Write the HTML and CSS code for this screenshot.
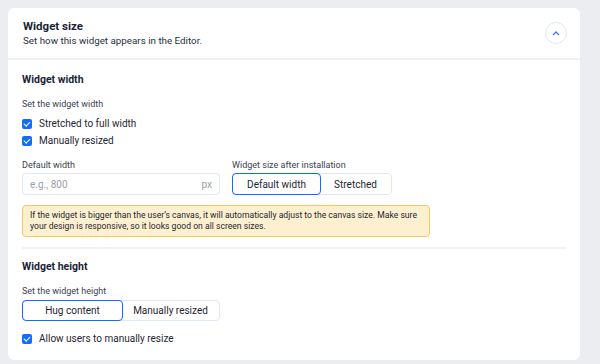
FILE: index.html
```html
<!DOCTYPE html>
<html lang="en">
<head>
  <meta charset="UTF-8">
  <title>Widget size</title>
  <link rel="stylesheet" href="styles.css">
</head>
<body>
  <div class="card">
    <div class="card-header">
      <div>
        <h1>Widget size</h1>
        <p class="subtitle">Set how this widget appears in the Editor.</p>
      </div>
      <button class="collapse" type="button" aria-label="Collapse">
        <svg width="8" height="5" viewBox="0 0 8 5"><path d="M1 4 L4 1 L7 4" fill="none" stroke="#3f7bf0" stroke-width="1.3"/></svg>
      </button>
    </div>

    <div class="card-body">
      <h2>Widget width</h2>
      <p class="hint">Set the widget width</p>
      <label class="check"><span class="box"></span>Stretched to full width</label>
      <label class="check"><span class="box"></span>Manually resized</label>

      <div class="field-row">
        <div class="field">
          <span class="field-label">Default width</span>
          <div class="input">
            <span class="placeholder">e.g., 800</span>
            <span class="unit">px</span>
          </div>
        </div>
        <div class="field">
          <span class="field-label">Widget size after installation</span>
          <div class="segmented seg-small">
            <span class="seg active">Default width</span>
            <span class="seg">Stretched</span>
          </div>
        </div>
      </div>

      <div class="notice">
        If the widget is bigger than the user’s canvas, it will automatically adjust to the canvas size. Make sure<br>
        your design is responsive, so it looks good on all screen sizes.
      </div>

      <hr class="divider">

      <h2>Widget height</h2>
      <p class="hint tight">Set the widget height</p>
      <div class="segmented seg-wide">
        <span class="seg active">Hug content</span>
        <span class="seg">Manually resized</span>
      </div>
      <label class="check last"><span class="box"></span>Allow users to manually resize</label>
    </div>
  </div>
</body>
</html>
```

FILE: styles.css
```css
body {
  margin: 0;
  padding: 8px 20px 0 8px;
  height: 364px;
  box-sizing: border-box;
  overflow: hidden;
  background: #ecedf1;
  font-family: Roboto, "Noto Sans", sans-serif;
  color: #1a1f36;
}

.card {
  width: 572px;
  height: 352px;
  background: #fff;
  border-radius: 6px;
  overflow: hidden;
}

.card-header {
  display: flex;
  justify-content: space-between;
  align-items: center;
  height: 50px;
  padding: 0 13px 0 15px;
  border-bottom: 2px solid #f0f1f4;
}

h1 {
  margin: 0;
  font-size: 11.5px;
  font-weight: 700;
  line-height: 15px;
}

.subtitle {
  margin: 0;
  font-size: 9.8px;
  line-height: 14px;
  color: #2a3040;
}

.collapse {
  width: 22px;
  height: 22px;
  padding: 0;
  border: 1px solid #dfe7fa;
  border-radius: 50%;
  background: #fff;
  display: flex;
  align-items: center;
  justify-content: center;
}

.card-body {
  padding: 13px 14px 0 14px;
}

h2 {
  margin: 0;
  font-size: 10.5px;
  font-weight: 700;
  line-height: 14px;
}

.hint {
  margin: 11px 0 5px;
  font-size: 9px;
  line-height: 12px;
  color: #3a4152;
}

.hint.tight {
  margin: 11px 0 3px;
}

.check {
  display: flex;
  align-items: center;
  gap: 7px;
  height: 17px;
  font-size: 10px;
  color: #1f2533;
}

.box {
  width: 10px;
  height: 10px;
  border-radius: 2px;
  background: #116dff;
  position: relative;
}

.box::after {
  content: "";
  position: absolute;
  left: 3px;
  top: 1px;
  width: 2.5px;
  height: 5px;
  border: solid #fff;
  border-width: 0 1.3px 1.3px 0;
  transform: rotate(45deg);
}

.field-row {
  display: flex;
  gap: 12px;
  margin-top: 10px;
}

.field {
  display: flex;
  flex-direction: column;
}

.field-label {
  font-size: 9px;
  line-height: 12px;
  color: #3a4152;
  margin-bottom: 2px;
}

.input {
  width: 198px;
  height: 22px;
  box-sizing: border-box;
  border: 1px solid #dfe7fa;
  border-radius: 4px;
  display: flex;
  justify-content: space-between;
  align-items: center;
  padding: 0 7px;
  font-size: 10px;
  color: #9aa0ab;
}

.segmented {
  display: flex;
  height: 22px;
  box-sizing: border-box;
  border: 1px solid #dfe7fa;
  border-radius: 4px;
}

.seg {
  flex: 1;
  display: flex;
  align-items: center;
  justify-content: center;
  font-size: 10px;
  color: #1f2533;
  margin: -1px;
}

.seg.active {
  border: 1px solid #116dff;
  border-radius: 4px;
}

.seg-small {
  width: 160px;
}

.seg-small .seg.active {
  flex: 0 0 87px;
}

.seg-wide {
  width: 198px;
  height: 21px;
}

.notice {
  width: 408px;
  box-sizing: border-box;
  margin-top: 10px;
  padding: 4px 6px 4px 7px;
  background: #fdf0cf;
  border: 1px solid #f4c862;
  border-radius: 4px;
  font-size: 8.6px;
  line-height: 11px;
  white-space: nowrap;
  color: #1f2533;
}

.divider {
  margin: 10px 0 11px;
  border: none;
  border-top: 2px solid #f1f3f7;
}

.check.last {
  margin-top: 9px;
}
```
